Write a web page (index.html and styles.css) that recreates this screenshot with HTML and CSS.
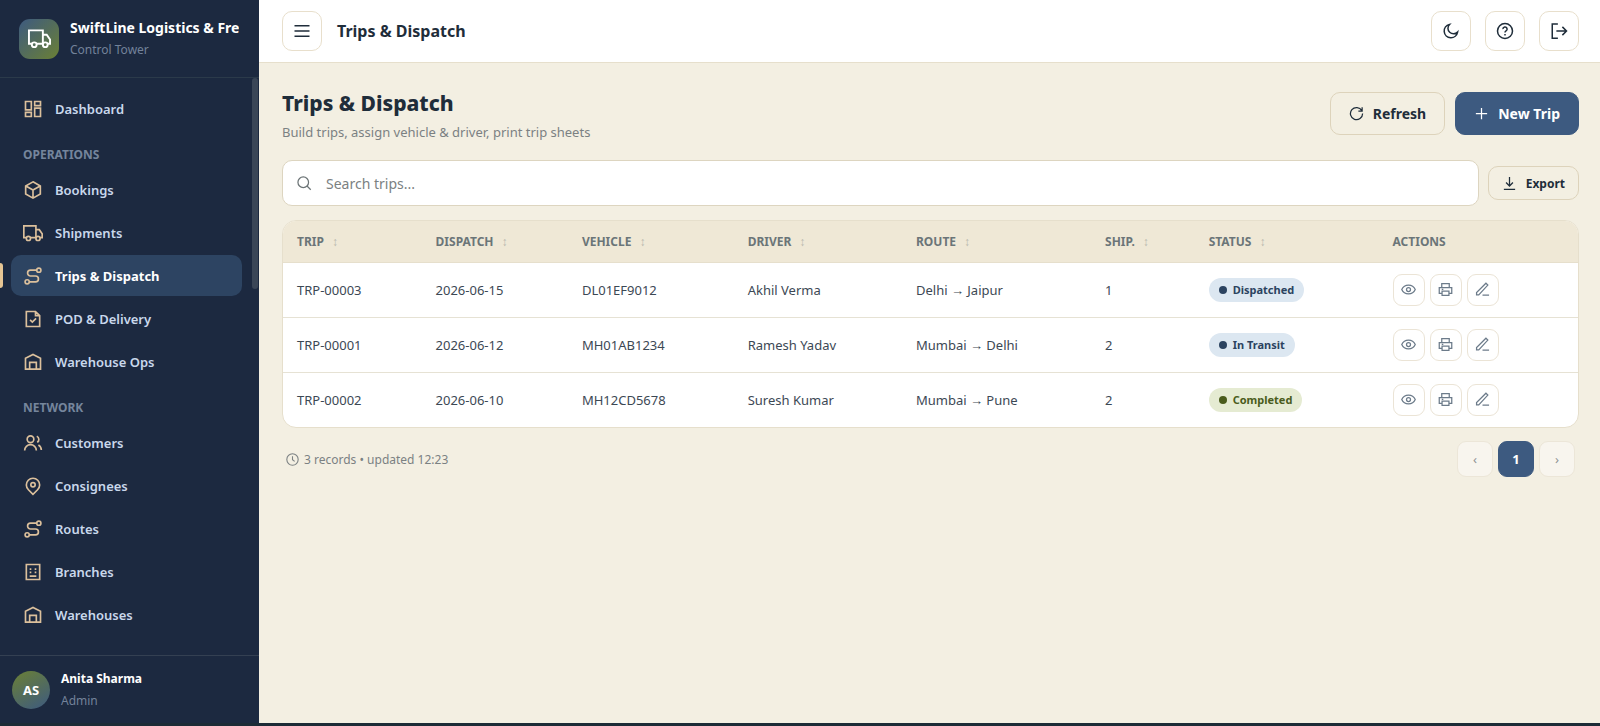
FILE: index.html
```html
<!DOCTYPE html>
<html lang="en">
<head>
  <meta charset="UTF-8" />
  <meta name="viewport" content="width=device-width, initial-scale=1.0" />
  <title>SwiftLine Logistics - Trips &amp; Dispatch</title>
  <link rel="stylesheet" href="styles.css">
</head>
<body>
  <!-- icon set -->
  <svg class="sprite" aria-hidden="true">
    <symbol id="i-truck" viewBox="0 0 24 24"><path d="M4 17.500H1V3.500H15.500V17.500H9M15.500 8h4l3.500 5v4.500h-2.500" /><circle cx="6.500" cy="18.500" r="2.500" /><circle cx="18" cy="18.500" r="2.500" /></symbol>
    <symbol id="i-dash" viewBox="0 0 24 24"><path d="M3 3h7v10H3zM14 3h7v5h-7zM14 11h7v10h-7zM3 16h7v5H3z" /></symbol>
    <symbol id="i-box" viewBox="0 0 24 24"><path d="M12 2.200l8.800 4.900v9.800L12 21.800l-8.800-4.900V7.100zM3.500 7.300L12 12l8.500-4.700M12 12v9.500" /></symbol>
    <symbol id="i-route" viewBox="0 0 24 24"><circle cx="5" cy="19" r="2.500" /><circle cx="19" cy="5" r="2.500" /><path d="M16.500 5H9a3.500 3.500 0 0 0 0 7h6a3.500 3.500 0 0 1 0 7H7.500" /></symbol>
    <symbol id="i-pod" viewBox="0 0 24 24"><path d="M4 3h11l5 5v13H4zM15 3v5h5M8.500 13l2.700 2.700 4.500-4.500" /></symbol>
    <symbol id="i-wh" viewBox="0 0 24 24"><path d="M3 20.500V7.500L12 3l9 4.500v13zM8 20.500V12.500h8v8" /></symbol>
    <symbol id="i-users" viewBox="0 0 24 24"><circle cx="9" cy="7.500" r="4" /><path d="M2 21a7 7 0 0 1 14 0M16.500 4a4 4 0 0 1 .5 7.200M18.500 14.500A7 7 0 0 1 22 20.500" /></symbol>
    <symbol id="i-pin" viewBox="0 0 24 24"><path d="M12 22l-5.500-5.500a8 8 0 1 1 11 0z" /><circle cx="12" cy="10.500" r="2.600" /></symbol>
    <symbol id="i-branch" viewBox="0 0 24 24"><path d="M4 3h16v18H4zM8 17h8M8 8.500h2M14 8.500h2M8 12.500h2M14 12.500h2" /></symbol>
    <symbol id="i-menu" viewBox="0 0 24 24"><path d="M2 5h20M2 12h20M2 19h20" /></symbol>
    <symbol id="i-moon" viewBox="0 0 24 24"><path d="M10 3.200A6.800 6.800 0 0 0 20.800 13.500 9 9 0 1 1 10 3.200z" /></symbol>
    <symbol id="i-help" viewBox="0 0 24 24"><circle cx="12" cy="12" r="10" /><path d="M9.200 9.500a2.800 2.800 0 1 1 4.200 2.400c-.9.500-1.400 1-1.400 2M12 16v2" /></symbol>
    <symbol id="i-exit" viewBox="0 0 24 24"><path d="M10.500 2.500H3v19h7.500M8.500 12H21.500M16.500 6.500l5.500 5.500-5.500 5.500" /></symbol>
    <symbol id="i-refresh" viewBox="0 0 24 24"><path d="M20.500 7.500A9.700 9.700 0 1 0 21.700 12M21 2v6h-6" /></symbol>
    <symbol id="i-plus" viewBox="0 0 24 24"><path d="M12 3v18M3 12h18" /></symbol>
    <symbol id="i-search" viewBox="0 0 24 24"><circle cx="10" cy="10" r="8.500" /><path d="M16 16l6 6" /></symbol>
    <symbol id="i-down" viewBox="0 0 24 24"><path d="M12 1.500V16M6.500 10.500L12 16l5.500-5.500M3 21.500h18" /></symbol>
    <symbol id="i-eye" viewBox="0 0 24 24"><path d="M1.200 12C3.200 7.500 7.300 5 12 5S20.800 7.500 22.800 12C20.800 16.500 16.700 19 12 19S3.200 16.500 1.200 12z" /><circle cx="12" cy="12" r="3.200" /></symbol>
    <symbol id="i-print" viewBox="0 0 24 24"><path d="M6 9V2.500h12V9M6 18H2V9h20v9h-4M6.500 14.500h11v7h-11zM6 11.800h2.500" /></symbol>
    <symbol id="i-edit" viewBox="0 0 24 24"><path d="M2.500 20.500v-3.500L17.500 2l3 3L6 20.500zM12 21h10.500" /></symbol>
    <symbol id="i-clock" viewBox="0 0 24 24"><circle cx="12" cy="12" r="10.500" /><path d="M12 6v6.500l4 3" /></symbol>
  </svg>

  <div class="app">
    <aside class="sidebar">
      <div class="brand">
        <span class="brand-logo"><svg class="icon"><use href="#i-truck" /></svg></span>
        <div class="brand-text">
          <div class="brand-name">SwiftLine Logistics &amp; Fre</div>
          <div class="brand-sub">Control Tower</div>
        </div>
      </div>

      <nav class="nav">
        <a href="#dashboard"><svg class="icon"><use href="#i-dash" /></svg>Dashboard</a>
        <div class="nav-label">Operations</div>
        <a href="#bookings"><svg class="icon"><use href="#i-box" /></svg>Bookings</a>
        <a href="#shipments"><svg class="icon"><use href="#i-truck" /></svg>Shipments</a>
        <a href="#trips" class="active"><svg class="icon"><use href="#i-route" /></svg>Trips &amp; Dispatch</a>
        <a href="#pod"><svg class="icon"><use href="#i-pod" /></svg>POD &amp; Delivery</a>
        <a href="#ops"><svg class="icon"><use href="#i-wh" /></svg>Warehouse Ops</a>
        <div class="nav-label">Network</div>
        <a href="#customers"><svg class="icon"><use href="#i-users" /></svg>Customers</a>
        <a href="#consignees"><svg class="icon"><use href="#i-pin" /></svg>Consignees</a>
        <a href="#routes"><svg class="icon"><use href="#i-route" /></svg>Routes</a>
        <a href="#branches"><svg class="icon"><use href="#i-branch" /></svg>Branches</a>
        <a href="#warehouses"><svg class="icon"><use href="#i-wh" /></svg>Warehouses</a>
        <span class="nav-thumb"></span>
      </nav>

      <div class="user">
        <span class="avatar">AS</span>
        <div>
          <div class="user-name">Anita Sharma</div>
          <div class="user-role">Admin</div>
        </div>
      </div>
    </aside>

    <div class="main">
      <header class="topbar">
        <button class="icon-btn" type="button" aria-label="Toggle menu"><svg class="icon"><use href="#i-menu" /></svg></button>
        <div class="topbar-title">Trips &amp; Dispatch</div>
        <div class="topbar-actions">
          <button class="icon-btn" type="button" aria-label="Dark mode"><svg class="icon"><use href="#i-moon" /></svg></button>
          <button class="icon-btn" type="button" aria-label="Help"><svg class="icon"><use href="#i-help" /></svg></button>
          <button class="icon-btn" type="button" aria-label="Log out"><svg class="icon"><use href="#i-exit" /></svg></button>
        </div>
      </header>

      <main class="content">
        <div class="page-head">
          <div class="page-title">
            <h1>Trips &amp; Dispatch</h1>
            <p>Build trips, assign vehicle &amp; driver, print trip sheets</p>
          </div>
          <div class="page-actions">
            <button class="btn" type="button"><svg class="icon"><use href="#i-refresh" /></svg>Refresh</button>
            <button class="btn btn-primary" type="button"><svg class="icon"><use href="#i-plus" /></svg>New Trip</button>
          </div>
        </div>

        <div class="toolbar">
          <label class="search">
            <svg class="icon"><use href="#i-search" /></svg>
            <input type="search" placeholder="Search trips..." aria-label="Search trips">
          </label>
          <button class="btn btn-sm" type="button"><svg class="icon"><use href="#i-down" /></svg>Export</button>
        </div>

        <div class="card">
          <table>
            <colgroup>
              <col class="c-trip"><col class="c-date"><col class="c-vehicle"><col class="c-driver">
              <col class="c-route"><col class="c-ship"><col class="c-status"><col>
            </colgroup>
            <thead>
              <tr>
                <th>Trip<span class="sort">↕</span></th>
                <th>Dispatch<span class="sort">↕</span></th>
                <th>Vehicle<span class="sort">↕</span></th>
                <th>Driver<span class="sort">↕</span></th>
                <th>Route<span class="sort">↕</span></th>
                <th>Ship.<span class="sort">↕</span></th>
                <th>Status<span class="sort">↕</span></th>
                <th>Actions</th>
              </tr>
            </thead>
            <tbody id="tripRows"></tbody>
          </table>
        </div>

        <div class="table-foot">
          <div class="records"><svg class="icon"><use href="#i-clock" /></svg>3 records • updated 12:23</div>
          <div class="pager">
            <button type="button" disabled aria-label="Previous">‹</button>
            <button type="button" class="current">1</button>
            <button type="button" disabled aria-label="Next">›</button>
          </div>
        </div>
      </main>
    </div>
  </div>
  <div class="bottom-strip"></div>

  <script>
    const trips = [
      { id: "TRP-00003", date: "2026-06-15", vehicle: "DL01EF9012", driver: "Akhil Verma", route: "Delhi → Jaipur", ship: 1, status: "Dispatched", tone: "blue" },
      { id: "TRP-00001", date: "2026-06-12", vehicle: "MH01AB1234", driver: "Ramesh Yadav", route: "Mumbai → Delhi", ship: 2, status: "In Transit", tone: "blue" },
      { id: "TRP-00002", date: "2026-06-10", vehicle: "MH12CD5678", driver: "Suresh Kumar", route: "Mumbai → Pune", ship: 2, status: "Completed", tone: "green" }
    ];

    function actionBtn(icon, label) {
      return `<button type="button" aria-label="${label}"><svg class="icon"><use href="#i-${icon}" /></svg></button>`;
    }

    document.getElementById("tripRows").innerHTML = trips.map(t => `
      <tr>
        <td>${t.id}</td>
        <td>${t.date}</td>
        <td>${t.vehicle}</td>
        <td>${t.driver}</td>
        <td>${t.route}</td>
        <td>${t.ship}</td>
        <td><span class="pill pill-${t.tone}">${t.status}</span></td>
        <td><div class="row-actions">${actionBtn("eye", "View")}${actionBtn("print", "Print")}${actionBtn("edit", "Edit")}</div></td>
      </tr>
    `).join("");
  </script>
</body>
</html>
```
FILE: styles.css
```css
* { box-sizing: border-box; }
body { margin: 0; height: 100vh; display: flex; flex-direction: column; font-family: "Segoe UI", "Noto Sans", sans-serif; font-size: 14px; color: #1f2d3a; background: #f3efe2; }
button, input { font-family: inherit; }
button { cursor: pointer; }
.sprite { position: absolute; width: 0; height: 0; }
.icon { width: 20px; height: 20px; flex: none; fill: none; stroke: currentColor; stroke-width: 2; }

.app { flex: 1; min-height: 0; display: flex; }
.bottom-strip { height: 3px; background: #1c2b36; }

/* sidebar */
.sidebar { width: 259px; flex: none; display: flex; flex-direction: column; background: #1c2940; color: #fff; }
.brand { display: flex; align-items: center; gap: 11px; height: 78px; padding: 0 16px 0 19px; border-bottom: 1px solid #2b3a4a; }
.brand-logo { width: 40px; height: 40px; flex: none; display: flex; align-items: center; justify-content: center; border-radius: 11px; background: linear-gradient(135deg, #3d5a80, #6b8035); }
.brand-logo .icon { width: 23px; height: 23px; }
.brand-text { min-width: 0; }
.brand-name { overflow: hidden; white-space: nowrap; font-size: 14px; font-weight: 700; line-height: 22px; }
.brand-sub { font-size: 12px; line-height: 22px; color: #73829a; }

.nav { flex: 1; min-height: 0; position: relative; overflow: hidden; display: flex; flex-direction: column; gap: 2px; padding: 10px 17px 10px 11px; }
.nav a { flex: none; position: relative; display: flex; align-items: center; gap: 12px; height: 41px; padding: 0 12px; border-radius: 10px; color: #c9d8ec; font-size: 13px; font-weight: 600; text-decoration: none; }
.nav a .icon { color: #dcc09c; }
.nav a.active { background: #2d4462; color: #fff; font-weight: 700; }
.nav a.active::before { content: ""; position: absolute; left: -11px; top: 8px; width: 3px; height: 25px; border-radius: 0 3px 3px 0; background: #e6c594; }
.nav-label { flex: none; padding: 15px 12px 3px; font-size: 12px; font-weight: 700; line-height: 18px; text-transform: uppercase; color: #75859c; }
.nav-thumb { position: absolute; top: 0; right: 1px; width: 6px; height: 211px; border-radius: 3px; background: #3a4657; }

.user { display: flex; align-items: center; gap: 11px; height: 68px; padding: 0 12px; border-top: 1px solid #344052; }
.avatar { width: 38px; height: 38px; display: flex; align-items: center; justify-content: center; border-radius: 50%; background: linear-gradient(150deg, #6b8035, #3d5a80); font-size: 13px; font-weight: 700; }
.user-name { font-size: 12px; font-weight: 700; line-height: 22px; }
.user-role { font-size: 12px; line-height: 22px; color: #73829a; }

/* top bar */
.main { flex: 1; min-width: 0; display: flex; flex-direction: column; }
.topbar { display: flex; align-items: center; gap: 15px; height: 63px; padding: 0 21px 1px 23px; background: #fff; border-bottom: 1px solid #e6dfcc; }
.topbar-title { flex: 1; font-size: 16px; font-weight: 700; }
.topbar-actions { display: flex; gap: 14px; }
.icon-btn { width: 40px; height: 40px; display: flex; align-items: center; justify-content: center; padding: 0; border: 1px solid #e8dfcc; border-radius: 10px; background: #fff; color: #1f2d3a; }
.icon-btn .icon { width: 18px; height: 18px; }

/* page */
.content { padding: 26px 21px 0 23px; }
.page-head { display: flex; justify-content: space-between; align-items: flex-start; margin-bottom: 18px; }
.page-title { height: 53px; }
h1 { margin: 0 0 2px; font-size: 21px; font-weight: 800; line-height: 28px; }
.page-head p { margin: 0; font-size: 13px; line-height: 26px; color: #7b8182; }
.page-actions { display: flex; gap: 10px; padding-top: 3px; }
.btn { display: flex; align-items: center; gap: 9px; height: 43px; padding: 0 18px; border: 1px solid #ddd3bb; border-radius: 10px; background: transparent; color: #1f2d3a; font-size: 14px; font-weight: 700; }
.btn .icon { width: 15px; height: 15px; }
.btn-primary { border-color: #3d5a80; background: #3d5a80; color: #fff; }
.btn-sm { height: 34px; padding: 0 13px; font-size: 12px; }

.toolbar { display: flex; align-items: center; gap: 9px; margin-bottom: 14px; }
.search { flex: 1; display: flex; align-items: center; gap: 14px; height: 46px; padding: 0 14px; border: 1px solid #ddd5c0; border-radius: 10px; background: #fff; color: #6c7476; }
.search .icon { width: 15px; height: 15px; }
.search input { flex: 1; padding: 0; border: 0; outline: 0; background: transparent; font-size: 14px; color: #1f2d3a; }
.search input::placeholder { color: #7b8182; }

.card { overflow: hidden; border: 1px solid #e6dfcc; border-radius: 14px; background: #fff; }
table { width: 100%; border-collapse: collapse; table-layout: fixed; }
.c-trip { width: 10.7%; }
.c-date { width: 11.3%; }
.c-vehicle { width: 12.8%; }
.c-driver { width: 13%; }
.c-route { width: 14.6%; }
.c-ship { width: 8%; }
.c-status { width: 14.2%; }
th { height: 41px; padding: 0 14px; background: #efe8d6; border-bottom: 1px solid #e6dfcc; text-align: left; font-size: 12px; font-weight: 700; text-transform: uppercase; color: #6b7578; }
.sort { margin-left: 8px; color: #b9b8ae; font-weight: 400; }
td { height: 55px; padding: 0 14px; border-bottom: 1px solid #e6e2d4; font-size: 13px; color: #3c4854; }
tbody tr:last-child td { border-bottom: 0; }
.pill { display: inline-flex; align-items: center; gap: 6px; height: 24px; padding: 0 10px; border-radius: 12px; font-size: 11px; font-weight: 700; vertical-align: middle; }
.pill::before { content: ""; width: 8px; height: 8px; border-radius: 50%; background: currentColor; }
.pill-blue { background: #dce7f1; color: #2b4360; }
.pill-green { background: #e5ebd2; color: #4a5c1c; }
.row-actions { display: flex; gap: 5px; }
.row-actions button { width: 32px; height: 32px; display: flex; align-items: center; justify-content: center; padding: 0; border: 1px solid #ebe4d6; border-radius: 9px; background: #fff; color: #6c7b8a; }
.row-actions .icon { width: 15px; height: 15px; }

.table-foot { display: flex; justify-content: space-between; align-items: center; padding: 13px 4px; }
.records { display: flex; align-items: center; gap: 5px; font-size: 12px; color: #7b8182; }
.records .icon { width: 13px; height: 13px; }
.pager { display: flex; gap: 5px; }
.pager button { width: 36px; height: 36px; padding: 0; border: 1px solid #ece6d8; border-radius: 9px; background: #f8f5ee; color: #8f9494; font-size: 13px; }
.pager .current { border-color: #3d5a80; background: #3d5a80; color: #fff; font-weight: 700; }
```
